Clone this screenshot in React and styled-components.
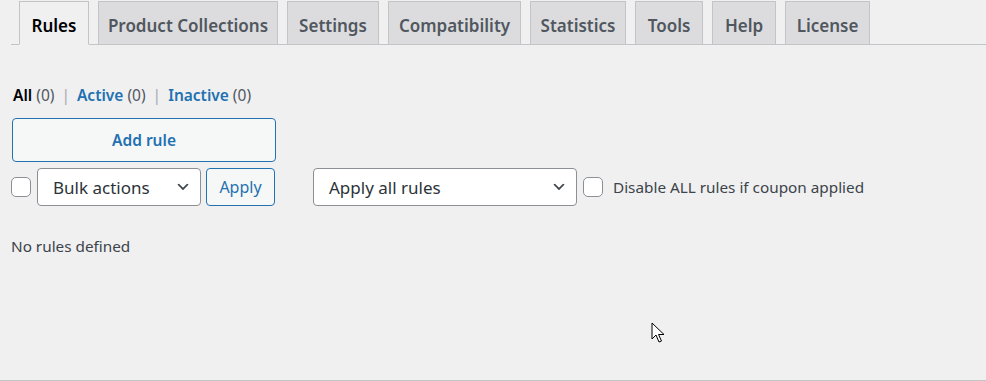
import React from "react";
import styled, { createGlobalStyle } from "styled-components";

const GlobalStyle = createGlobalStyle`
  html, body { margin: 0; padding: 0; }
  body {
    background: #f0f0f1;
    font-family: "Noto Sans", "Open Sans", sans-serif;
    color: #3c434a;
  }
`;

const Page = styled.div`
  height: 381px;
  box-sizing: border-box;
  border-bottom: 1px solid #c3c4c7;
  position: relative;
  overflow: hidden;
`;

const TabBar = styled.nav`
  display: flex;
  gap: 9px;
  margin-left: 11px;
  padding: 1px 0 0 8px;
  border-bottom: 1px solid #c3c4c7;
  height: 45px;
  box-sizing: border-box;
  align-items: flex-end;
`;

const Tab = styled.div`
  box-sizing: border-box;
  width: ${(p) => p.$w}px;
  height: 44px;
  margin-bottom: -1px;
  padding-top: 4px;
  border: 1px solid #c3c4c7;
  border-bottom-color: ${(p) => (p.$active ? "#f0f0f1" : "#c3c4c7")};
  background: ${(p) => (p.$active ? "#f0f0f1" : "#dcdcde")};
  color: ${(p) => (p.$active ? "#000" : "#50575e")};
  font-size: 17px;
  font-weight: 600;
  display: flex;
  align-items: center;
  justify-content: center;
  white-space: nowrap;
`;

const Content = styled.main`
  padding: 0 0 0 11px;
`;

const Filters = styled.div`
  margin-top: 40px;
  font-size: 15.5px;
  line-height: 20px;
  color: #50575e;
  padding-left: 2px;
`;

const FilterItem = styled.span`
  font-weight: 600;
  color: ${(p) => (p.$current ? "#000" : "#2271b1")};
`;

const Sep = styled.span`
  color: #a7aaad;
  margin: 0 7px;
`;

const AddButton = styled.button`
  display: block;
  margin: 13px 0 0 1px;
  width: 264px;
  height: 44px;
  border: 1px solid #2271b1;
  border-radius: 4px;
  background: #f6f7f7;
  color: #2271b1;
  font-family: inherit;
  font-size: 15.5px;
  font-weight: 600;
`;

const Toolbar = styled.div`
  display: flex;
  align-items: center;
  margin-top: 6px;
  height: 38px;
`;

const Box = styled.span`
  box-sizing: border-box;
  width: 20px;
  height: 20px;
  border: 1px solid #8c8f94;
  border-radius: 5px;
  background: #fff;
  flex: none;
`;

const SelectBox = styled.div`
  box-sizing: border-box;
  width: ${(p) => p.$w}px;
  height: 38px;
  margin-left: ${(p) => p.$ml}px;
  border: 1px solid #8c8f94;
  border-radius: 4px;
  background: #fff;
  display: flex;
  align-items: center;
  justify-content: space-between;
  padding: 0 9px 0 15px;
  font-size: 17px;
  color: #2c3338;
`;

const ApplyButton = styled.button`
  box-sizing: border-box;
  margin-left: 5px;
  width: 69px;
  height: 38px;
  border: 1px solid #2271b1;
  border-radius: 4px;
  background: #f6f7f7;
  color: #2271b1;
  font-family: inherit;
  font-size: 16px;
  padding: 0;
`;

const CheckLabel = styled.label`
  display: flex;
  align-items: center;
  gap: 10px;
  margin-left: 6px;
  font-size: 15.3px;
  color: #3c434a;
`;

const Empty = styled.p`
  margin: 30px 0 0;
  font-size: 15.3px;
  color: #3c434a;
`;

const Cursor = styled.svg`
  position: absolute;
  left: 651px;
  top: 322px;
`;

const Chevron = () => (
  <svg width="16" height="16" viewBox="0 0 20 20" aria-hidden="true">
    <path d="M5 6l5 5 5-5 2 1-7 7-7-7 2-1z" fill="#3c434a" />
  </svg>
);

const tabs = [
  ["Rules", 70, true],
  ["Product Collections", 180],
  ["Settings", 92],
  ["Compatibility", 133],
  ["Statistics", 96],
  ["Tools", 68],
  ["Help", 64],
  ["License", 85],
];

export default function App() {
  return (
    <>
      <GlobalStyle />
      <Page>
        <TabBar>
          {tabs.map(([label, w, active]) => (
            <Tab key={label} $w={w} $active={active}>
              {label}
            </Tab>
          ))}
        </TabBar>
        <Content>
          <Filters>
            <FilterItem $current>All</FilterItem> (0)
            <Sep>|</Sep>
            <FilterItem>Active</FilterItem> (0)
            <Sep>|</Sep>
            <FilterItem>Inactive</FilterItem> (0)
          </Filters>
          <AddButton>Add rule</AddButton>
          <Toolbar>
            <Box />
            <SelectBox $w={164} $ml={6}>
              <span>Bulk actions</span>
              <Chevron />
            </SelectBox>
            <ApplyButton>Apply</ApplyButton>
            <SelectBox $w={264} $ml={38}>
              <span>Apply all rules</span>
              <Chevron />
            </SelectBox>
            <CheckLabel>
              <Box />
              Disable ALL rules if coupon applied
            </CheckLabel>
          </Toolbar>
          <Empty>No rules defined</Empty>
        </Content>
        <Cursor width="14" height="22" viewBox="0 0 14 22">
          <path
            d="M1 1 L1 17 L5 13 L8 20 L10.5 19 L7.5 12.5 L13 12.5 Z"
            fill="#fff"
            stroke="#000"
            strokeWidth="1"
            strokeLinejoin="miter"
          />
        </Cursor>
      </Page>
    </>
  );
}
